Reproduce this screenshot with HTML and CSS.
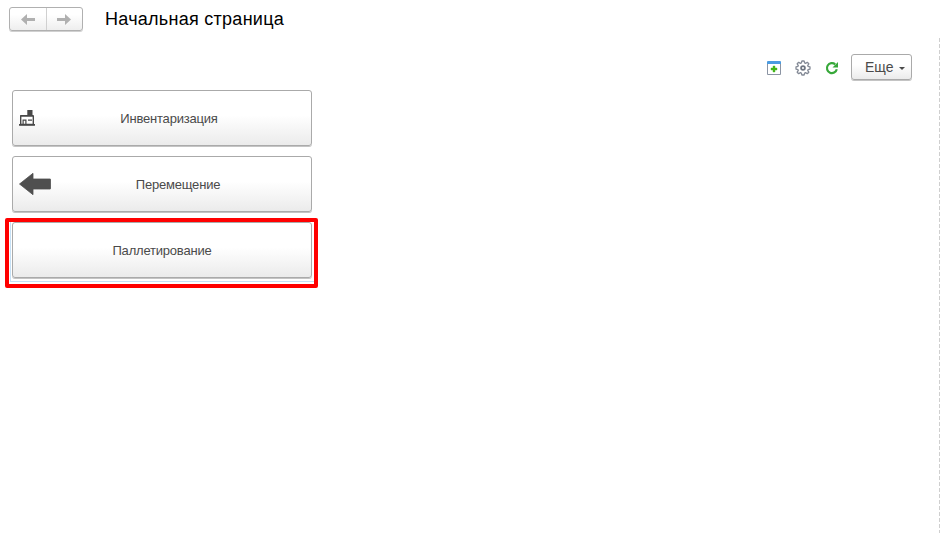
FILE: index.html
```html
<!DOCTYPE html>
<html lang="ru">
<head>
<meta charset="utf-8">
<title>Начальная страница</title>
<link rel="stylesheet" href="styles.css">
</head>
<body>
<header class="header">
  <div class="nav">
    <button class="nav-btn" aria-label="Назад"><svg width="14" height="11" viewBox="0 0 14 11"><path d="M0 5.500 6 0v4h8v3H6v4z" fill="#b0b0b0"/></svg></button>
    <button class="nav-btn" aria-label="Вперед"><svg width="14" height="11" viewBox="0 0 14 11"><path d="M14 5.500 8 0v4H0v3h8v4z" fill="#b0b0b0"/></svg></button>
  </div>
  <h1 class="title">Начальная страница</h1>
</header>
<main class="page">
  <div class="toolbar">
    <svg class="tool" width="14" height="14" viewBox="0 0 14 14"><path d="M.5 2v11.500h13V2" fill="#fff" stroke="#8b94a3"/><path d="M0 1q0-1 1-1h12q1 0 1 1v2H0z" fill="#4b9be0"/><path d="M6 5h2v2h2v2H8v2H6V9H4V7h2z" fill="#43b51b" stroke="#43b51b" stroke-width=".4"/></svg>
    <svg class="tool" width="16" height="16" viewBox="0 0 16 16" fill="none" stroke="#848a96" stroke-width="1.300" stroke-linejoin="round"><path d="M6.300 3 6.900 1h2.200l.6 2 .7.300L12.300 2.300 13.800 3.800 12.700 5.600 13 6.300l2 .6v2.200l-2 .6-.3.700 1.100 1.800-1.500 1.500-1.900-1-.7.300-.6 2H6.900l-.6-2-.7-.3-1.900 1-1.500-1.500 1.100-1.800-.3-.7-2-.6V6.900l2-.6.3-.7-1.100-1.800 1.500-1.500 1.900 1z"/><circle cx="8" cy="8" r="1.900" stroke="#6f7682" stroke-width="1.800"/></svg>
    <svg class="tool" width="14" height="14" viewBox="0 0 14 14"><path d="M10.200 3.300A5 5 0 1 0 11.800 8.300" fill="none" stroke="#37a83a" stroke-width="2.200"/><path d="M13 1v5.500H7.500z" fill="#37a83a"/></svg>
    <button class="more">Еще<span class="caret"></span></button>
  </div>
  <div class="commands">
    <button class="command">
      <svg class="house" width="16" height="16" viewBox="0 0 16 16"><path d="M8.300 0h5.200v6H8.300zM1.500 5H14v1.500H1.500z" fill="#484848"/><path d="M1.700 6h12.600v8.500H1.700z" fill="#fff" stroke="#484848" stroke-width="1.400"/><path d="M0 14h16v1.700H0zM3.500 9.500h4v5.500H6.300v-4.300H4.700V15H3.500zM9 9.500h4v1.300H9z" fill="#484848"/></svg>
      <span class="label">Инвентаризация</span>
    </button>
    <button class="command">
      <svg class="arrow" width="32" height="24" viewBox="0 0 32 24"><path d="M.5 12 14 1.300V7h17q.7 0 .7.700v8.600q0 .7-.7.700H14v5.700z" fill="#4f4f4f" stroke="#4f4f4f" stroke-width=".8" stroke-linejoin="round"/></svg>
      <span class="label">Перемещение</span>
    </button>
    <div class="selected">
      <button class="command"><span class="label">Паллетирование</span></button>
    </div>
  </div>
</main>
<svg class="divider" width="1" height="495"><path d="M.5 0V495" stroke="#cfcfcf" stroke-dasharray="4 2"/></svg>
</body>
</html>
```
FILE: styles.css
```css
* { box-sizing: border-box; }
body {
  margin: 0;
  height: 533px;
  overflow: hidden;
  position: relative;
  background: #fff;
  font-family: "Liberation Sans", Arial, sans-serif;
  color: #4a4a4a;
}
button { font: inherit; color: inherit; padding: 0; margin: 0; }
svg { display: block; flex: none; }
.header { display: flex; height: 38px; padding: 7px 0 0 9px; align-items: flex-start; }
.nav {
  display: flex;
  width: 74px;
  height: 24px;
  border: 1px solid #b0b0b0;
  box-shadow: 0 1px 0 #d0d0d0;
  border-radius: 3px;
  background: linear-gradient(#fff 30%, #eee);
}
.nav-btn { flex: 1; display: flex; align-items: center; justify-content: center; border: 0; background: none; padding-top: 1px; }
.nav-btn + .nav-btn { border-left: 1px solid #d0d0d0; }
.title { margin: 2px 0 0 22px; font-size: 18px; line-height: 21px; font-weight: 400; letter-spacing: 0.27px; color: #000; white-space: nowrap; }
.page { padding: 16px 29px 0 5px; }
.toolbar { display: flex; justify-content: flex-end; align-items: center; height: 27px; }
.tool { margin-right: 14px; }
.tool:nth-child(3) { margin-right: 12px; }
.more {
  display: flex;
  align-items: center;
  width: 61px;
  height: 26px;
  margin-bottom: 1px;
  padding-left: 13px;
  border: 1px solid #aaa;
  box-shadow: 0 1px 0 #c4c4c4;
  border-radius: 3px;
  background: linear-gradient(#fff 40%, #ebebeb);
  font-size: 14px;
}
.caret { margin: 3px 0 0 5px; border: 3px solid transparent; border-top-color: #4a4a4a; border-bottom: 0; }
.commands { display: flex; flex-direction: column; align-items: flex-start; padding: 9px 0 0; }
.command {
  display: flex;
  align-items: center;
  width: 300px;
  height: 56px;
  margin: 0 0 10px 7px;
  padding: 0 6px;
  border: 1px solid #aaa;
  box-shadow: 0 1px 0 #c4c4c4;
  border-radius: 3px;
  background: linear-gradient(#fff 45%, #ebebeb);
  font-size: 13px;
}
.label { flex: 1; padding-top: 1px; text-align: center; letter-spacing: -0.2px; white-space: nowrap; }
.house { margin-right: -2px; }
.selected {
  width: 313px;
  height: 70px;
  margin-top: -4px;
  border: 4px solid #f00;
  border-radius: 2px;
  box-shadow: inset 1px -2px 0 #fff, inset 2px -3px 0 #c5e0f5;
}
.selected .command { margin: 0 0 0 3px; }
.divider { position: absolute; left: 939px; top: 38px; }
```
